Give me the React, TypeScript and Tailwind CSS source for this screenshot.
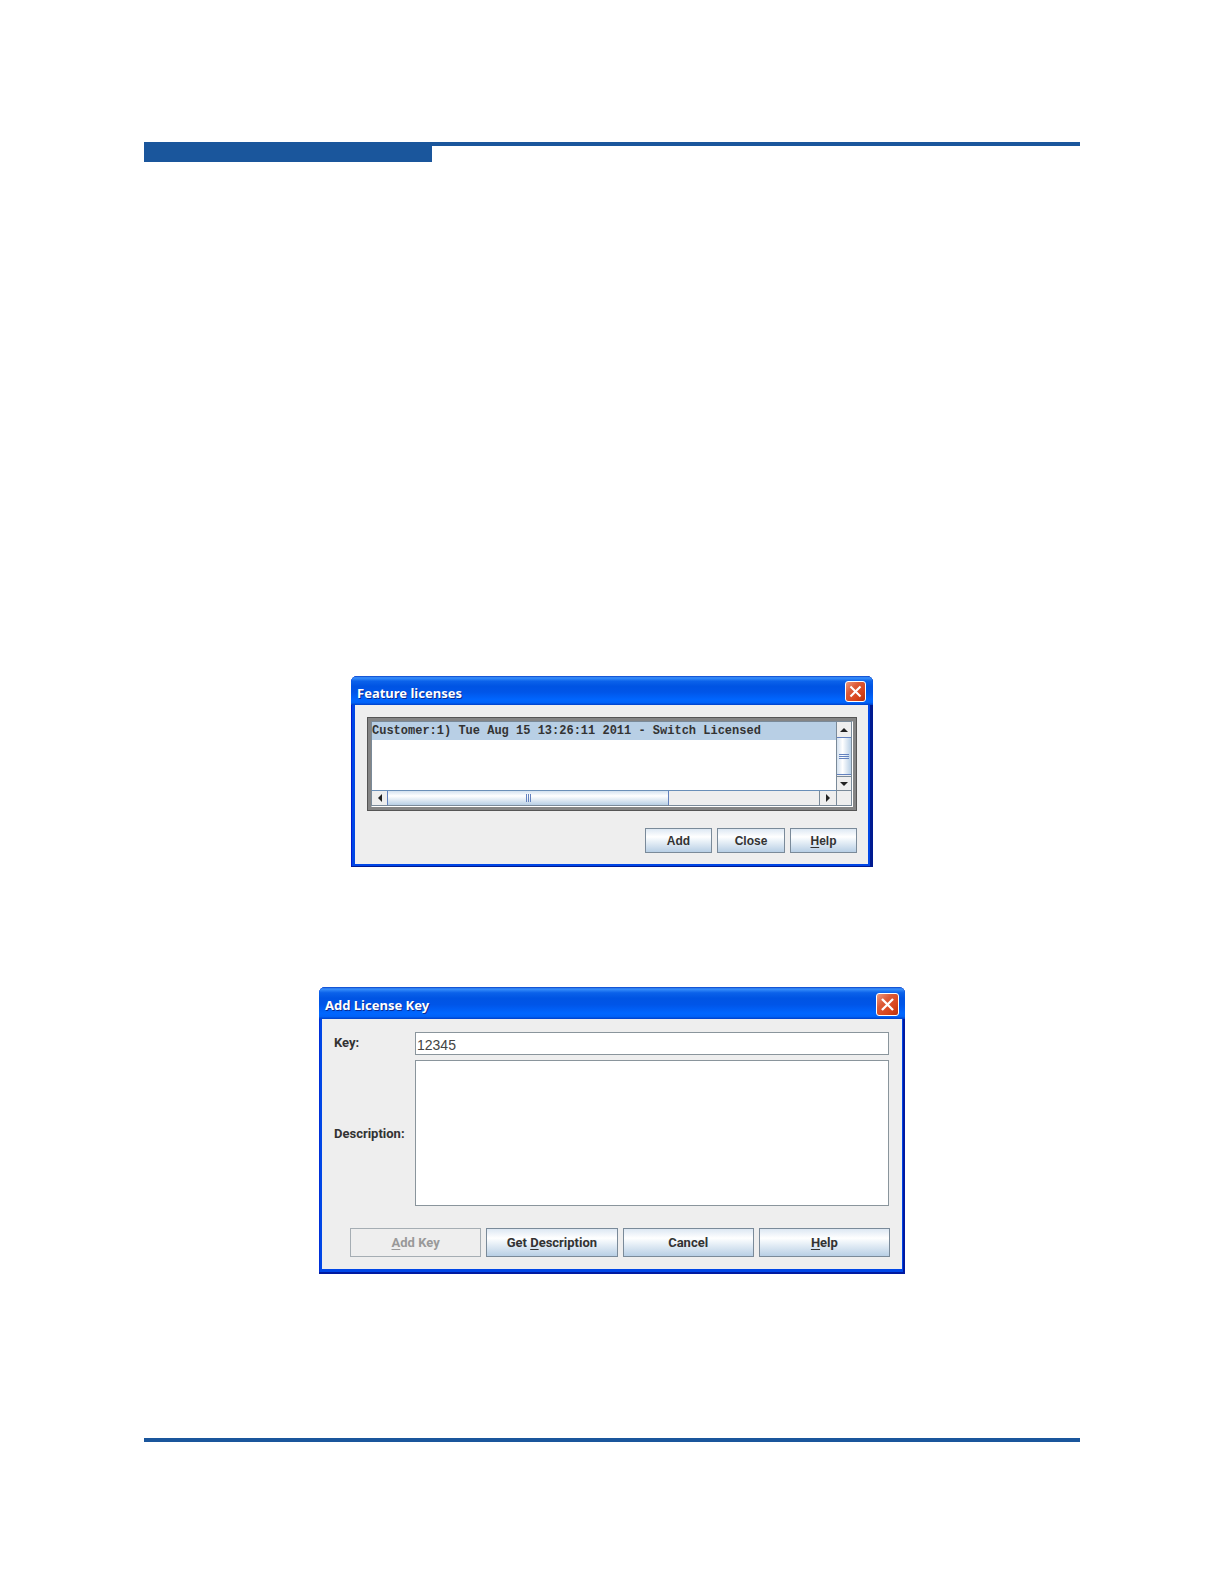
import React, { type ReactNode } from "react";

const TITLE_BAR =
  "bg-[linear-gradient(to_bottom,#0840c8_0%,#3a90fb_6%,#0b62ea_18%,#0054e3_35%,#0055e8_55%,#0066ff_82%,#0062f8_92%,#0040c8_100%)]";

function CloseButton({ className }: { className: string }) {
  return (
    <button
      type="button"
      aria-label="Close window"
      className={`flex items-center justify-center rounded-[3px] border border-white bg-[linear-gradient(135deg,#ee9a80_0%,#dc5a38_35%,#d8451c_70%,#b8300c_100%)] ${className}`}
    >
      <svg viewBox="0 0 20 20" className="size-full" fill="none" stroke="white" strokeWidth="2.2" strokeLinecap="square">
        <path d="M5.5 5.5 14.5 14.5M14.5 5.5 5.5 14.5" />
      </svg>
    </button>
  );
}

function PushButton({ children, className, disabled }: { children: ReactNode; className: string; disabled?: boolean }) {
  return (
    <button
      type="button"
      disabled={disabled}
      className={`border border-[#7a8a99] font-bold text-[#333] bg-[linear-gradient(to_bottom,#dde8f3_0%,#ffffff_34%,#f2f7fb_45%,#b8cfe5_100%)] disabled:border-[#a5adb3] disabled:bg-none disabled:text-[#999] ${className}`}
    >
      {children}
    </button>
  );
}

function Mnemonic({ children }: { children: string }) {
  return <span className="underline underline-offset-2">{children}</span>;
}

function ArrowButton({ label, path, className }: { label: string; path: string; className: string }) {
  return (
    <button type="button" aria-label={label} className={`flex shrink-0 items-center justify-center border-[#7a8a99] bg-[#eee] ${className}`}>
      <svg viewBox="0 0 10 10" className="size-2.5 fill-[#222]">
        <path d={path} />
      </svg>
    </button>
  );
}

function FeatureLicenses() {
  return (
    <section
      aria-label="Feature licenses"
      className="ml-[207px] w-full max-w-[522px] overflow-hidden rounded-t-[6px] bg-[#0046e6] shadow-[inset_-3px_-1px_0_#001a90,inset_1px_0_0_#0019cf]"
    >
      <header className={`flex h-[29px] items-center justify-between pt-0.5 pr-[7px] pl-1.5 ${TITLE_BAR}`}>
        <h2 className="pt-0.5 font-['Noto_Sans'] text-[13px] leading-4 font-bold text-white [text-shadow:1px_1px_0_#0a2a90]">
          Feature licenses
        </h2>
        <CloseButton className="size-[21px]" />
      </header>
      <div className="mr-[5px] mb-[3px] ml-1 bg-[#eee] pt-3 pr-[11px] pb-[11px] pl-3">
        <div className="border border-[#555] bg-[#858585] p-[3px]">
          <div className="grid h-[86px] grid-cols-[minmax(0,1fr)_16px] grid-rows-[minmax(0,1fr)_16px] border-t border-r border-b border-l border-[#7a8a99] border-r-white border-b-white">
            <ul className="bg-white font-['Liberation_Mono'] text-[12px] leading-[18px] font-bold whitespace-pre text-[#333]">
              <li className="bg-[#b8cfe5]">Customer:1) Tue Aug 15 13:26:11 2011 - Switch Licensed</li>
            </ul>
            <div className="flex flex-col border-r border-l border-[#7a8a99] bg-[#eee]">
              <ArrowButton label="Scroll up" path="M1 7h8L5 3z" className="h-[15px]" />
              <div className="flex flex-1 flex-col items-center justify-center gap-px border-y border-[#6382bf] bg-[linear-gradient(to_right,#d4e2f0_0%,#ffffff_40%,#b8cfe5_100%)]">
                <span className="h-px w-2.5 bg-[#6382bf]" />
                <span className="h-px w-2.5 bg-[#6382bf]" />
                <span className="h-px w-2.5 bg-[#6382bf]" />
              </div>
              <ArrowButton label="Scroll down" path="M1 3h8L5 7z" className="mt-px h-[14px] border-t" />
            </div>
            <div className="flex border-t border-b border-[#7a8a99] border-t-[#6a8fb8] bg-[#eee]">
              <ArrowButton label="Scroll left" path="M7 1v8L3 5z" className="w-[15px]" />
              <div className="flex flex-[281] items-center justify-center gap-px border-x border-[#6382bf] bg-[linear-gradient(to_bottom,#d4e2f0_0%,#ffffff_35%,#b8cfe5_100%)]">
                <span className="h-2 w-px bg-[#6382bf]" />
                <span className="h-2 w-px bg-[#6382bf]" />
                <span className="h-2 w-px bg-[#6382bf]" />
              </div>
              <div className="flex-[150]" />
              <ArrowButton label="Scroll right" path="M3 1v8L7 5z" className="w-[17px] border-l" />
            </div>
            <div className="border border-[#7a8a99] bg-[#eee]" />
          </div>
        </div>
        <div className="mt-[17px] flex justify-end gap-[5px] font-['Liberation_Sans']">
          <PushButton className="h-[25px] w-[67px] text-[12px]">Add</PushButton>
          <PushButton className="h-[25px] w-[68px] text-[12px]">Close</PushButton>
          <PushButton className="h-[25px] w-[67px] text-[12px]">
            <Mnemonic>H</Mnemonic>elp
          </PushButton>
        </div>
      </div>
    </section>
  );
}

function AddLicenseKey() {
  return (
    <section
      aria-label="Add License Key"
      className="mt-[120px] ml-[175px] w-full max-w-[586px] overflow-hidden rounded-t-[6px] bg-[#0046e6] shadow-[inset_-2px_-2px_0_#001aa0,inset_1px_0_0_#0030d8]"
    >
      <header className={`flex h-8 items-center justify-between pt-0.5 pr-1.5 pl-1.5 ${TITLE_BAR}`}>
        <h2 className="pt-0.5 font-['Noto_Sans'] text-[13px] leading-4 font-bold text-white [text-shadow:1px_1px_0_#0a2a90]">
          Add License Key
        </h2>
        <CloseButton className="size-[23px]" />
      </header>
      <form className="mx-[3px] mb-[5px] bg-[#eee] pt-[13px] pr-3 pb-3 pl-3 font-['Roboto'] text-[13px] text-[#333]">
        <div className="grid grid-cols-[76px_minmax(0,1fr)] gap-[5px] pr-px">
          <label htmlFor="license-key" className="self-center pb-0.5 leading-4 font-bold">
            Key:
          </label>
          <input
            id="license-key"
            defaultValue="12345"
            className="h-[23px] w-full border border-[#8a959c] bg-white pt-0.5 pl-px font-['Liberation_Sans'] text-[14px] leading-4 text-[#444] outline-none"
          />
          <label htmlFor="license-description" className="self-center pt-0.5 leading-4 font-bold">
            Description:
          </label>
          <textarea
            id="license-description"
            className="block h-[146px] w-full resize-none border border-[#8a959c] bg-white p-0.5 outline-none"
          />
        </div>
        <div className="mt-[22px] ml-4 grid grid-cols-4 gap-[5px]">
          <PushButton disabled className="h-[29px]">
            <Mnemonic>A</Mnemonic>dd Key
          </PushButton>
          <PushButton className="h-[29px]">
            Get <Mnemonic>D</Mnemonic>escription
          </PushButton>
          <PushButton className="h-[29px]">Cancel</PushButton>
          <PushButton className="h-[29px]">
            <Mnemonic>H</Mnemonic>elp
          </PushButton>
        </div>
      </form>
    </section>
  );
}

export default function App() {
  return (
    <div className="min-h-screen bg-white px-36 pt-[142px] pb-[142px]">
      <div className="h-1 bg-[#1a569c]" />
      <div className="h-4 w-72 bg-[#1a569c]" />
      <main className="pt-[514px] pb-[164px]">
        <FeatureLicenses />
        <AddLicenseKey />
      </main>
      <div className="h-1 bg-[#1a569c]" />
    </div>
  );
}
